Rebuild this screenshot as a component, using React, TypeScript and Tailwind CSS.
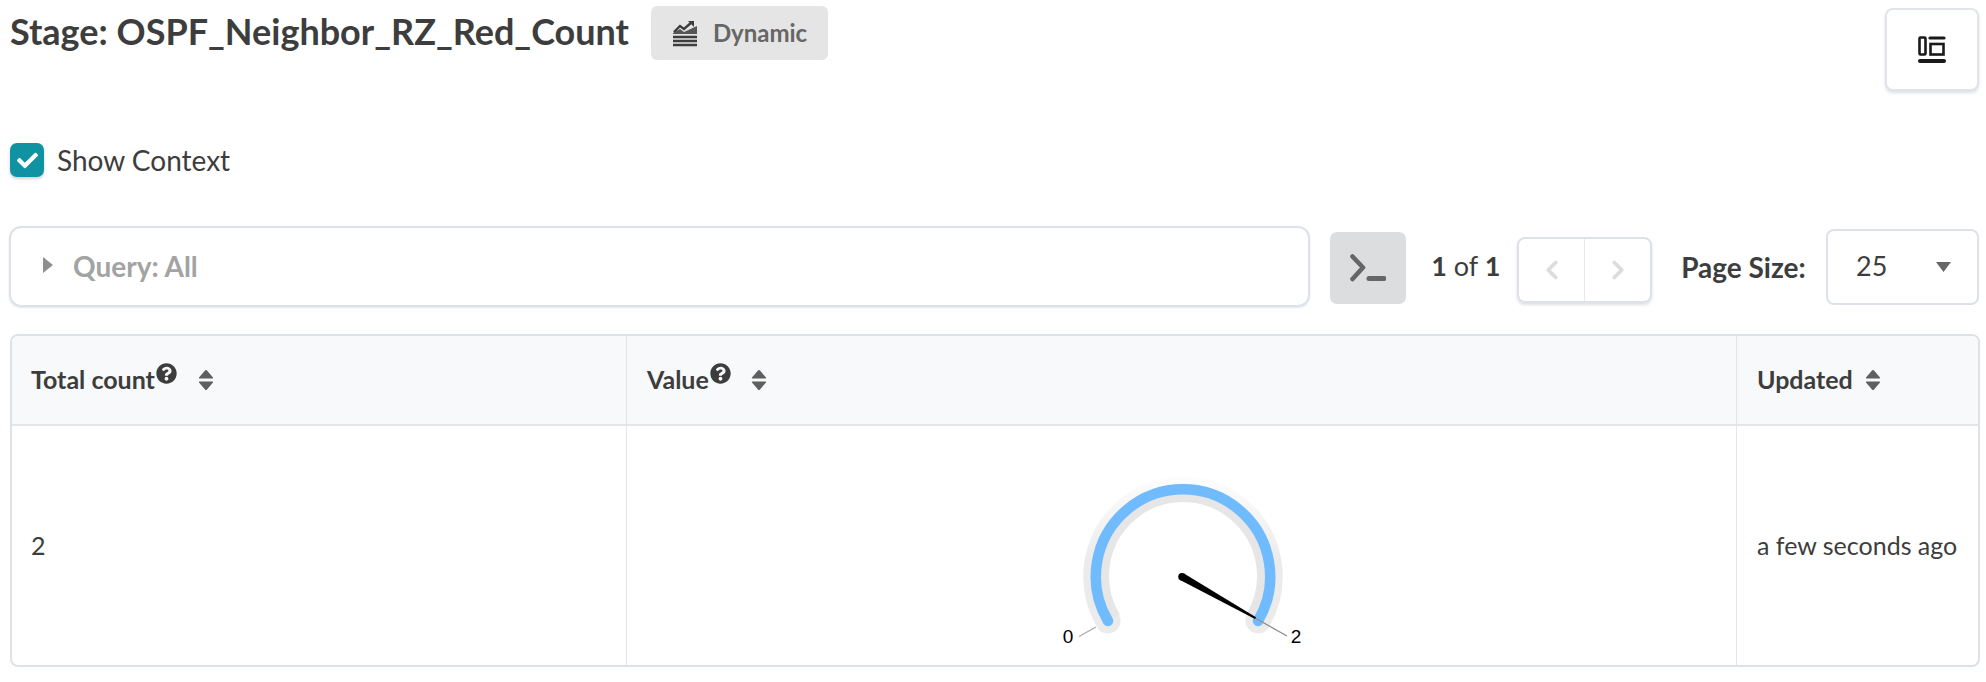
import { FaCheck, FaQuestionCircle } from 'react-icons/fa';
import { ChevronLeft, ChevronRight } from 'lucide-react';

function SortCarets() {
  return (
    <svg width="16" height="22" viewBox="0 0 16 22" className="fill-[#5f5f5f]">
      <path d="M8 1 Q8.6 1 9 1.6 L15 8.6 Q15.6 9.6 14.4 9.6 H1.6 Q0.4 9.6 1 8.6 L7 1.6 Q7.4 1 8 1 Z" />
      <path d="M8 21 Q8.6 21 9 20.4 L15 13.4 Q15.6 12.4 14.4 12.4 H1.6 Q0.4 12.4 1 13.4 L7 20.4 Q7.4 21 8 21 Z" />
    </svg>
  );
}

function HeaderHelp() {
  return <FaQuestionCircle className="w-[21px] h-[21px] text-[#3d3d3d] mb-[14px] ml-px" />;
}

function Gauge() {
  return (
    <svg width="280" height="200" viewBox="0 0 280 200">
      <defs>
        <linearGradient id="trackFade" x1="0" y1="16" x2="0" y2="100" gradientUnits="userSpaceOnUse">
          <stop offset="0" stopColor="#fdfdfd" />
          <stop offset="1" stopColor="#ebebeb" />
        </linearGradient>
      </defs>
      <path d="M66 160 A87.2 87.2 0 1 1 216 160" fill="none" stroke="url(#trackFade)" strokeWidth="25" strokeLinecap="round" />
      <path d="M73.5 156 A79 79 0 1 1 208.5 156" fill="none" stroke="#e6e6e6" strokeWidth="10" />
      <path d="M66 160 A87.2 87.2 0 1 1 216 160" fill="none" stroke="#6fbbfd" strokeWidth="10.5" strokeLinecap="round" />
      <path d="M37 175.5 L54 166" stroke="#a8a8a8" strokeWidth="1.2" />
      <path d="M213 157 L245 175" stroke="#8f8f8f" strokeWidth="1.4" />
      <path d="M137.6 118.8 L142 112.6 L214 156.2 L213 158 Z" fill="#000" />
      <circle cx="140" cy="115.8" r="3.8" fill="#000" />
      <text x="26" y="181.5" textAnchor="middle" fontSize="19" fontFamily="'Liberation Sans', sans-serif" fill="#000">0</text>
      <text x="254" y="181.5" textAnchor="middle" fontSize="19" fontFamily="'Liberation Sans', sans-serif" fill="#000">2</text>
    </svg>
  );
}

export default function App() {
  return (
    <div className="h-[682px] w-[1986px] bg-white pl-[9px] pr-[7px] text-[#3d3d3d] font-['Lato',sans-serif] overflow-hidden">
      <div className="flex items-start justify-between h-[110px]">
        <div className="flex items-start pt-[6px]">
          <h1 className="text-[36px] leading-[50px] font-bold ml-px">Stage: OSPF_Neighbor_RZ_Red_Count</h1>
          <span className="ml-[22px] h-[54px] w-[177px] rounded-[6px] bg-[#e5e5e5] flex items-center justify-center gap-[15px] text-[24px] font-bold text-[#666666]">
            <svg width="26" height="28" viewBox="0 0 26 28" fill="none" className="text-[#3d3d3d]">
              <path d="M2 13 L8 7 L12 10 L20 3" stroke="currentColor" strokeWidth="2.4" />
              <path d="M16 2 H22 V8 Z" fill="currentColor" />
              <path d="M1 14 L8 10 L12 13 L25 7 V15 H1 Z" fill="currentColor" opacity="0.85" />
              <path d="M1 18 H25 M1 22 H25 M1 26 H25" stroke="currentColor" strokeWidth="2.4" />
            </svg>
            Dynamic
          </span>
        </div>
        <button className="mt-[8px] w-[94px] h-[83px] rounded-[8px] border-2 border-[#e1e5ea] bg-white shadow-[0_2px_3px_rgba(120,130,150,0.25)] flex items-center justify-center">
          <svg width="28" height="28" viewBox="0 0 28 28" fill="none" stroke="#1a1a1a">
            <rect x="1.5" y="1.5" width="6" height="17" rx="1" strokeWidth="2.6" />
            <path d="M12 2 H26" strokeWidth="3.2" strokeLinecap="round" />
            <rect x="12.5" y="8" width="13" height="10.5" strokeWidth="2.6" />
            <path d="M2 25 H26" strokeWidth="4" strokeLinecap="round" />
          </svg>
        </button>
      </div>

      <div className="mt-[33px] ml-px flex items-center gap-[13px] h-[34px]">
        <span className="w-[34px] h-[34px] rounded-[7px] bg-[#0f93a3] shadow-[0_2px_3px_rgba(120,130,150,0.35)] flex items-center justify-center">
          <FaCheck className="w-[21px] h-[21px] text-white" />
        </span>
        <span className="text-[28px] leading-none">Show Context</span>
      </div>

      <div className="mt-[49px] flex items-center h-[81px]">
        <div className="w-[1302px] h-[81px] rounded-[12px] border-2 border-[#dde1e8] shadow-[0_1px_2px_rgba(120,130,150,0.2)] flex items-center pl-[32px]">
          <svg width="10" height="16" viewBox="0 0 10 16" className="fill-[#8f8f8f] mb-[3px]">
            <path d="M0 0 L10 8 L0 16 Z" />
          </svg>
          <span className="ml-[20px] text-[28px] font-bold text-[#a3a3a3] mb-[1px]">Query: All</span>
        </div>
        <button className="ml-[20px] mt-[2px] w-[76px] h-[72px] rounded-[7px] bg-[#dcdddf] flex items-center justify-center">
          <svg width="36" height="28" viewBox="0 0 36 28" fill="none" stroke="#666666" strokeWidth="4.6">
            <path d="M2.5 2.5 L13 13.5 L2.5 25" strokeLinecap="round" strokeLinejoin="round" />
            <path d="M19 24.5 H34" strokeWidth="5" strokeLinecap="round" />
          </svg>
        </button>
        <span className="ml-[25px] text-[27px] w-[86px] whitespace-nowrap">
          <b>1</b> of <b>1</b>
        </span>
        <div className="w-[135px] h-[66px] mt-[7px] rounded-[8px] border-2 border-[#dde1e8] shadow-[0_2px_3px_rgba(120,130,150,0.25)] flex">
          <span className="flex-1 flex items-center justify-center border-r border-[#e8e8e8]">
            <ChevronLeft className="w-[30px] h-[30px] text-[#dcdcdc]" strokeWidth={3} />
          </span>
          <span className="flex-1 flex items-center justify-center">
            <ChevronRight className="w-[30px] h-[30px] text-[#dcdcdc]" strokeWidth={3} />
          </span>
        </div>
        <span className="ml-[29px] text-[28px] font-bold w-[145px] whitespace-nowrap">Page Size:</span>
        <div className="w-[153px] h-[76px] rounded-[8px] border-2 border-[#dde1e8] flex items-center justify-between pl-[28px] pr-[26px]">
          <span className="text-[27px]">25</span>
          <svg width="15" height="10" viewBox="0 0 15 10" className="fill-[#666666]">
            <path d="M0 0 H15 L7.5 10 Z" />
          </svg>
        </div>
      </div>

      <div className="mt-[27px] ml-px w-[1970px] h-[333px] rounded-[8px] border-2 border-[#dde1e8] grid grid-cols-[615px_1110px_1fr] grid-rows-[90px_1fr] overflow-hidden text-[25px]">
        <div className="bg-[#f8f9fa] border-b-2 border-r border-[#e3e5e8] flex items-center pl-[19px] font-bold">
          Total count
          <HeaderHelp />
          <span className="ml-[21px]"><SortCarets /></span>
        </div>
        <div className="bg-[#f8f9fa] border-b-2 border-r border-[#e3e5e8] flex items-center pl-[20px] font-bold">
          Value
          <HeaderHelp />
          <span className="ml-[20px]"><SortCarets /></span>
        </div>
        <div className="bg-[#f8f9fa] border-b-2 border-[#e3e5e8] flex items-center pl-[20px] font-bold">
          Updated
          <span className="ml-[12px]"><SortCarets /></span>
        </div>
        <div className="border-r border-[#e3e5e8] flex items-center pl-[19px]">2</div>
        <div className="border-r border-[#e3e5e8] flex items-end justify-center pb-[4px] overflow-hidden">
          <Gauge />
        </div>
        <div className="flex items-center pl-[20px] whitespace-nowrap">a few seconds ago</div>
      </div>
    </div>
  );
}
